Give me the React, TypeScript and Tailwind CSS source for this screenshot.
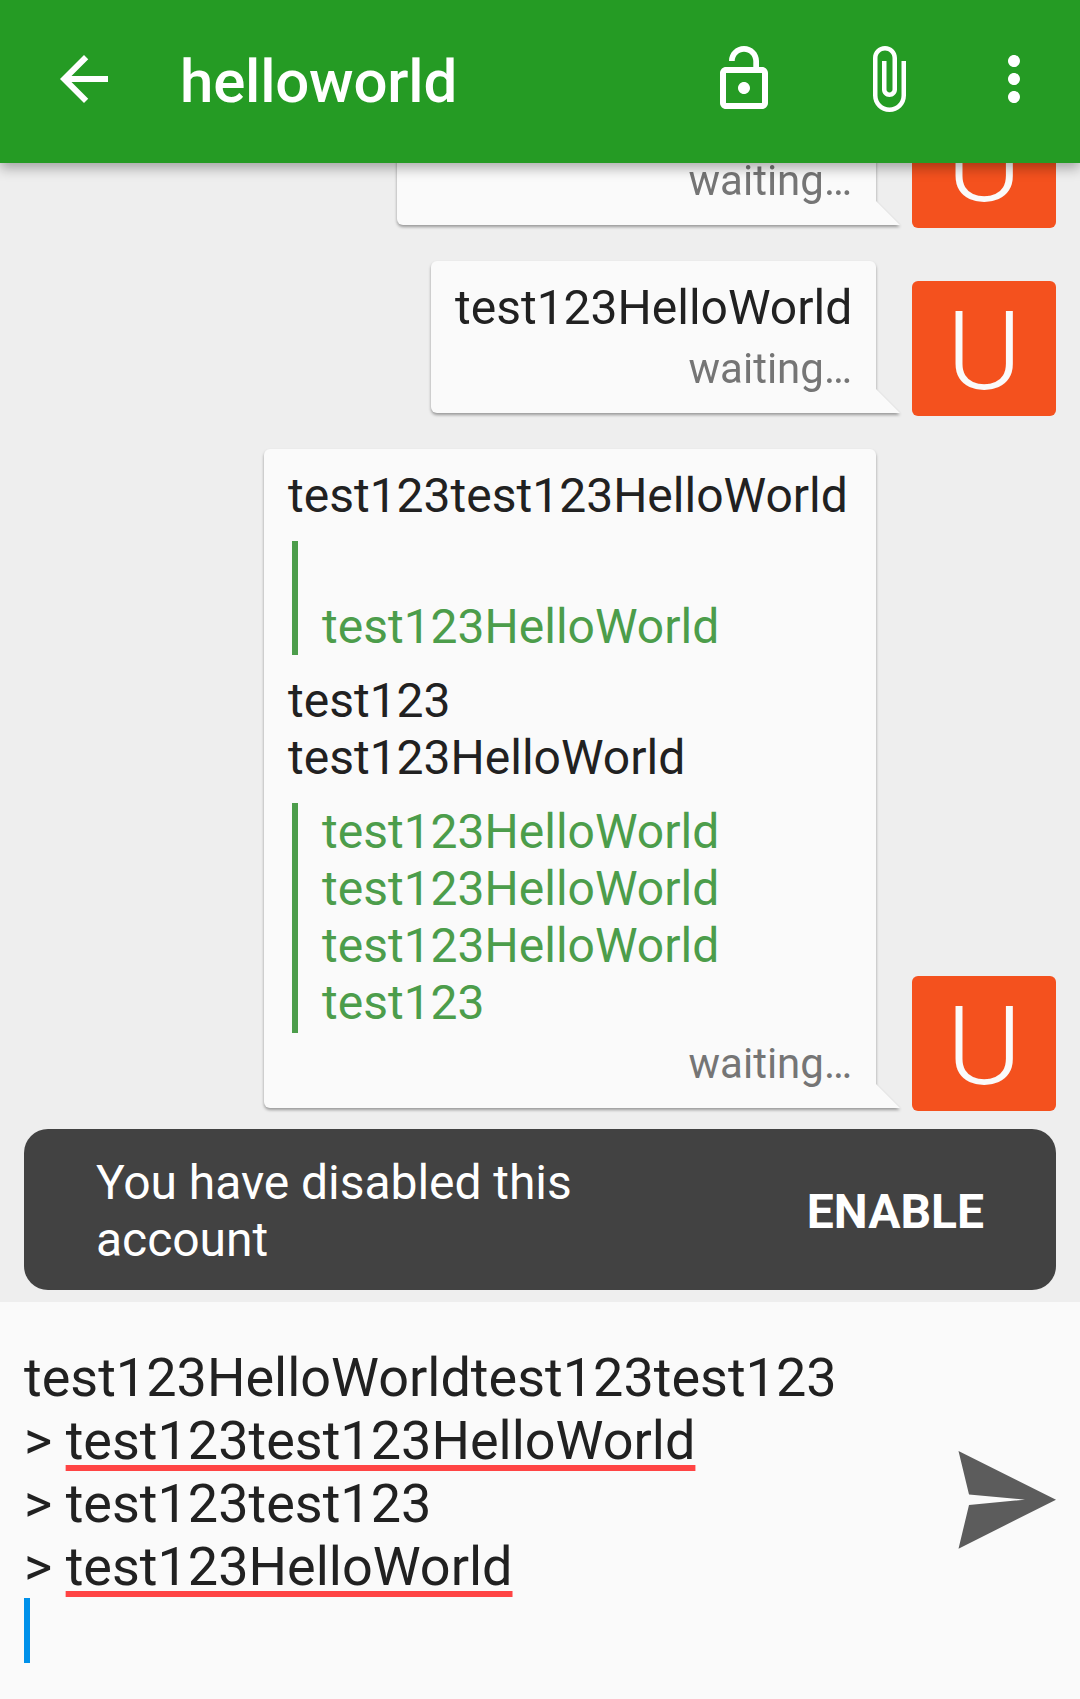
import type { ReactNode } from "react";

function Icon({ d, className = "" }: { d: string; className?: string }) {
  return (
    <svg viewBox="0 0 24 24" className={`size-[72px] shrink-0 fill-white ${className}`}>
      <path d={d} />
    </svg>
  );
}

const BACK = "M20 11H7.83l5.59-5.59L12 4l-8 8 8 8 1.41-1.41L7.83 13H20v-2z";
const LOCK_OPEN =
  "M12 17c1.1 0 2-.9 2-2s-.9-2-2-2-2 .9-2 2 .9 2 2 2zm6-9h-1V6c0-2.76-2.24-5-5-5S7 3.24 7 6h1.9c0-1.71 1.39-3.1 3.1-3.1 1.71 0 3.1 1.39 3.1 3.1v2H6c-1.1 0-2 .9-2 2v10c0 1.1.9 2 2 2h12c1.1 0 2-.9 2-2V10c0-1.1-.9-2-2-2zm0 12H6V10h12v10z";
const ATTACH =
  "M16.5 6v11.5c0 2.21-1.79 4-4 4s-4-1.79-4-4V5c0-1.38 1.12-2.5 2.5-2.5s2.5 1.12 2.5 2.5v10.5c0 .55-.45 1-1 1s-1-.45-1-1V6H10v9.5c0 1.38 1.12 2.5 2.5 2.5s2.5-1.12 2.5-2.5V5c0-2.21-1.79-4-4-4S7 2.79 7 5v12.5c0 3.04 2.46 5.5 5.5 5.5s5.5-2.46 5.5-5.5V6h-1.5z";
const MORE =
  "M12 8c1.1 0 2-.9 2-2s-.9-2-2-2-2 .9-2 2 .9 2 2 2zm0 2c-1.1 0-2 .9-2 2s.9 2 2 2 2-.9 2-2-.9-2-2-2zm0 6c-1.1 0-2 .9-2 2s.9 2 2 2 2-.9 2-2-.9-2-2-2z";

function Message({ width, children }: { width: string; children: ReactNode }) {
  return (
    <div className="flex shrink-0 items-end justify-end gap-9">
      <div className={`relative mb-[3px] rounded-md rounded-br-none bg-[#fafafa] px-6 pt-[18px] pb-5 drop-shadow-[0_2px_1.5px_rgba(0,0,0,0.36)] ${width}`}>
        <div className="text-[48px] leading-[57px] whitespace-nowrap text-[#212121]">{children}</div>
        <div className="mt-2 text-right text-[42px] leading-[49px] text-[#757575]">waiting…</div>
        <div className="absolute bottom-0 left-full size-6 bg-[#fafafa] [clip-path:polygon(0_0,100%_100%,0_100%)]" />
      </div>
      <div className="flex h-[135px] w-36 items-center justify-center rounded-md bg-[#f4511e] pt-1.5 text-[110px] leading-none font-light text-[#fafafa]">
        <span className="scale-x-[1.04]">U</span>
      </div>
    </div>
  );
}

function Quote({ lines, className = "" }: { lines: string[]; className?: string }) {
  return (
    <div className={`ml-1 border-l-[6px] border-[#4c9d4b] pl-6 text-[#4c9d4b] ${className}`}>
      {lines.map((line, i) => (
        <div key={i} className="h-[57px]">{line}</div>
      ))}
    </div>
  );
}

function Misspelled({ children }: { children: ReactNode }) {
  return (
    <span className="underline decoration-[#ff4444] decoration-[6px] underline-offset-[6px] [text-decoration-skip-ink:none]">
      {children}
    </span>
  );
}

export default function App() {
  return (
    <div className="flex h-[1699px] w-[1080px] flex-col overflow-hidden bg-[#eeeeee] font-['Roboto',sans-serif]">
      <header className="relative z-10 flex h-[163px] shrink-0 items-center bg-[#259b24] pr-[30px] pb-[5px] pl-12 shadow-[0_5px_12px_rgba(0,0,0,0.32)]">
        <Icon d={BACK} />
        <h1 className="ml-[60px] grow pt-1.5 text-[60px] leading-[76px] font-medium tracking-[-0.2px] text-white">helloworld</h1>
        <Icon d={LOCK_OPEN} />
        <Icon d={ATTACH} className="ml-[72px]" />
        <Icon d={MORE} className="ml-[54px]" />
      </header>

      <main className="flex min-h-0 grow flex-col justify-end gap-[33px] overflow-hidden px-6 pb-[18px]">
        <Message width="w-[479px]">
          <p className="h-[57px]" />
        </Message>
        <Message width="w-[445px]">test123HelloWorld</Message>
        <Message width="w-[612px]">
          <p>test123test123HelloWorld</p>
          <Quote lines={["", "test123HelloWorld"]} className="my-[17px]" />
          <p>test123</p>
          <p>test123HelloWorld</p>
          <Quote
            lines={["test123HelloWorld", "test123HelloWorld", "test123HelloWorld", "test123"]}
            className="mt-[17px] mb-[-2px] h-[230px]"
          />
        </Message>
      </main>

      <div className="mx-6 mb-3 flex h-[161px] shrink-0 items-center justify-between rounded-3xl bg-[#424242] px-[72px] text-[48px] leading-[57px] text-white">
        <p className="w-[560px] pt-[2px] tracking-[-0.05px]">You have disabled this account</p>
        <button className="pt-1 font-bold">ENABLE</button>
      </div>

      <footer className="flex h-[397px] shrink-0 items-start justify-between bg-[#fafafa] px-6 pt-11">
        <div className="text-[54px] leading-[63px] whitespace-nowrap text-[#212121]">
          <p>test123HelloWorldtest123test123</p>
          <p>&gt; <Misspelled>test123test123HelloWorld</Misspelled></p>
          <p>&gt; test123test123</p>
          <p>&gt; <Misspelled>test123HelloWorld</Misspelled></p>
          <div className="h-[65px] w-1.5 bg-[#0091ea]" />
        </div>
        <svg viewBox="0 0 98 98" className="mt-[105px] size-[98px] fill-[#5c5c5c]">
          <path d="M0.5 0L98 48.7L0.5 97.7L11 54L67 48.7L11 43.5Z" />
        </svg>
      </footer>
    </div>
  );
}
